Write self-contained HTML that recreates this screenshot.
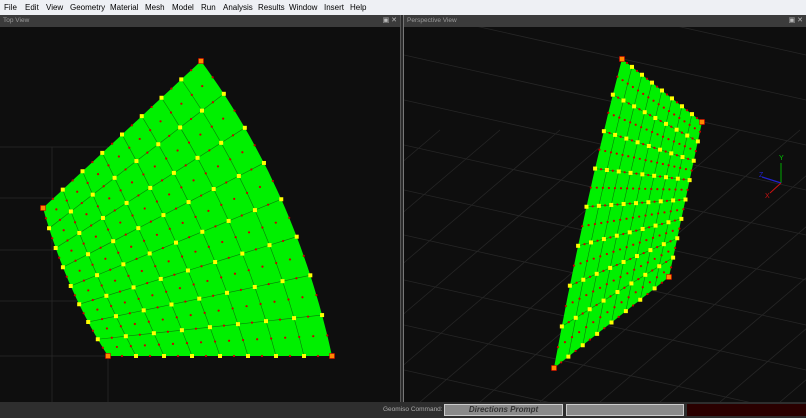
<!DOCTYPE html>
<html><head><meta charset="utf-8"><style>
html,body{margin:0;padding:0;width:806px;height:418px;overflow:hidden;background:#0e0e0e;font-family:"Liberation Sans",sans-serif}
#menu{position:absolute;left:0;top:0;width:806px;height:15px;background:#eef0f4;font-size:8px;color:#000;z-index:2}
#menu span{position:absolute;top:3px}
.hdr{position:absolute;top:15px;height:12px;background:#3b3b3b;color:#9a9a9a;font-size:6.5px;line-height:12px;padding-left:3px;box-sizing:border-box;z-index:2}
.hdr b{position:absolute;right:3px;top:0;font-weight:normal;color:#bbb;font-size:7px}
#div{position:absolute;left:400px;top:15px;width:4px;height:387px;background:#2a2a2a;border-left:1px solid #555;border-right:1px solid #777;box-sizing:border-box;z-index:2}
#bot{position:absolute;left:0;top:402px;width:806px;height:16px;background:#2e2e2e;z-index:2}
svg{position:absolute;left:0;top:0;overflow:hidden}
</style></head><body>
<div id="menu">
<span style="left:4px">File</span><span style="left:25px">Edit</span><span style="left:46px">View</span><span style="left:70px">Geometry</span><span style="left:110px">Material</span><span style="left:145px">Mesh</span><span style="left:172px">Model</span><span style="left:201px">Run</span><span style="left:223px">Analysis</span><span style="left:258px">Results</span><span style="left:289px">Window</span><span style="left:324px">Insert</span><span style="left:350px">Help</span>
</div>
<div class="hdr" style="left:0;width:400px">Top View<b>▣ ✕</b></div>
<div class="hdr" style="left:404px;width:402px">Perspective View<b>▣ ✕</b></div>
<svg id="s" width="806" height="418"></svg>
<div id="div"></div>
<div id="bot">
<div style="position:absolute;left:383px;top:4px;font-size:6.5px;color:#aaa">Geomiso Command:</div>
<div style="position:absolute;left:444px;top:2px;width:119px;height:12px;background:#8a8a8a;border:1px solid #ccc;box-sizing:border-box;text-align:center;font-size:8px;font-style:italic;font-weight:bold;color:#333;line-height:10px">Directions Prompt</div>
<div style="position:absolute;left:566px;top:2px;width:118px;height:12px;background:#8a8a8a;border:1px solid #ccc;box-sizing:border-box"></div>
<div style="position:absolute;left:687px;top:2px;width:119px;height:12px;background:#2a0000"></div>
</div>
<script>
var s='<defs><clipPath id="cr"><rect x="404" y="27" width="402" height="375"/></clipPath><clipPath id="cl"><rect x="0" y="27" width="400" height="375"/></clipPath></defs>';
s+='<g stroke="#2a2a2a" stroke-width="0.7" clip-path="url(#cl)">';
[147,198,250,301,356].forEach(function(y){s+='<line x1="0" y1="'+y+'" x2="108" y2="'+y+'"/>';});
[52,108].forEach(function(x){s+='<line x1="'+x+'" y1="147" x2="'+x+'" y2="402"/>';});
s+='</g>';
s+='<g stroke="#262626" stroke-width="0.8" clip-path="url(#cr)">';
for(var i=-6;i<12;i++){var y=i*45+100;s+='<line x1="404" y1="'+y+'" x2="806" y2="'+(y+90)+'"/>';}
for(var i=-6;i<14;i++){var x=i*60+300;s+='<line x1="'+x+'" y1="402" x2="'+(x+320)+'" y2="130"/>';}
s+='</g>';
s+='<line x1="781" y1="183" x2="781" y2="163" stroke="#0a0" stroke-width="1"/><text x="779" y="160" fill="#0c0" font-size="7">Y</text>';
s+='<line x1="781" y1="183" x2="762" y2="177" stroke="#22c" stroke-width="1.2"/><text x="759" y="177" fill="#22c" font-size="7">Z</text>';
s+='<line x1="781" y1="183" x2="770" y2="193" stroke="#c11" stroke-width="1"/><text x="765" y="198" fill="#c11" font-size="7">X</text>';
function lerp(a,b,t){return [a[0]+(b[0]-a[0])*t,a[1]+(b[1]-a[1])*t];}
function mesh(B,R,T,L,P00,P10,P01,P11){
 function P(u,v){var b=B(u),t=T(u),l=L(v),r=R(v);
  return [ (1-v)*b[0]+v*t[0]+(1-u)*l[0]+u*r[0]-((1-u)*(1-v)*P00[0]+u*(1-v)*P10[0]+(1-u)*v*P01[0]+u*v*P11[0]),
           (1-v)*b[1]+v*t[1]+(1-u)*l[1]+u*r[1]-((1-u)*(1-v)*P00[1]+u*(1-v)*P10[1]+(1-u)*v*P01[1]+u*v*P11[1])];}
 var N=8,o='';
 var poly=[];for(var i=0;i<=32;i++)poly.push(P(i/32,0));for(var i=0;i<=32;i++)poly.push(P(1,i/32));
 for(var i=32;i>=0;i--)poly.push(P(i/32,1));for(var i=32;i>=0;i--)poly.push(P(0,i/32));
 o+='<polygon fill="#00f000" points="'+poly.map(function(p){return p[0].toFixed(1)+','+p[1].toFixed(1)}).join(' ')+'"/>';
 for(var k=1;k<N;k++){var a=[],b=[];for(var i=0;i<=16;i++){a.push(P(k/N,i/16));b.push(P(i/16,k/N));}
  o+='<polyline fill="none" stroke="#0a7a0a" stroke-width="0.6" points="'+a.map(function(p){return p.join(',')}).join(' ')+'"/>';
  o+='<polyline fill="none" stroke="#0a7a0a" stroke-width="0.6" points="'+b.map(function(p){return p.join(',')}).join(' ')+'"/>';}
 for(var i=0;i<=2*N;i++)for(var j=0;j<=2*N;j++){var p=P(i/(2*N),j/(2*N));
  if(i%2==0&&j%2==0){o+='<rect x="'+(p[0]-2)+'" y="'+(p[1]-2)+'" width="4" height="4" fill="#ff0"/>';}
  else {o+='<circle cx="'+p[0]+'" cy="'+p[1]+'" r="1.1" fill="#c00"/>';}
 }
 [P00,P10,P01,P11].forEach(function(p){o+='<rect x="'+(p[0]-2.5)+'" y="'+(p[1]-2.5)+'" width="5" height="5" fill="#f80" stroke="#c00" stroke-width="0.6"/>';});
 return o;}
var A00=[108,356],A10=[332,356],A01=[43,208],A11=[201,61];
function quad(a,c,b){return function(t){return [(1-t)*(1-t)*a[0]+2*t*(1-t)*c[0]+t*t*b[0],(1-t)*(1-t)*a[1]+2*t*(1-t)*c[1]+t*t*b[1]];};}
s+=mesh(function(u){return lerp(A00,A10,u)},quad(A10,[296,190],A11),function(u){return lerp(A01,A11,u)},quad(A00,[66,290],A01),A00,A10,A01,A11);
var B00=[554,368],B10=[669,277],B01=[622,59],B11=[702,122];
s+=mesh(function(u){return lerp(B00,B10,u)},function(v){return lerp(B10,B11,v)},function(u){return lerp(B01,B11,u)},quad(B00,[585,200],B01),B00,B10,B01,B11);
document.getElementById('s').innerHTML=s;
</script>
</body></html>
